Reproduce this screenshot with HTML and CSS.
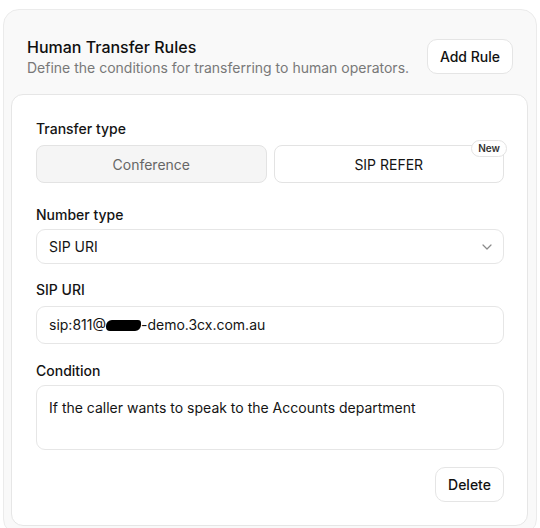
FILE: index.html
```html
<!DOCTYPE html>
<html lang="en">
<head>
<meta charset="utf-8">
<title>Human Transfer Rules</title>
<link rel="stylesheet" href="styles.css">
</head>
<body>
<section class="panel">
  <header class="panel-head">
    <div class="head-text">
      <h2 class="title">Human Transfer Rules</h2>
      <p class="subtitle">Define the conditions for transferring to human operators.</p>
    </div>
    <button class="btn btn-add">Add Rule</button>
  </header>

  <div class="rule-card">
    <div class="field field-first">
      <div class="label">Transfer type</div>
      <div class="toggle-group">
        <button class="toggle toggle-off">Conference</button>
        <button class="toggle toggle-on">SIP REFER<span class="badge">New</span></button>
      </div>
    </div>

    <div class="field field-number">
      <div class="label label-tight">Number type</div>
      <div class="select">
        <span>SIP URI</span>
        <svg class="chevron" width="16" height="16" viewBox="0 0 24 24" fill="none" stroke="currentColor" stroke-width="1.8" stroke-linecap="round" stroke-linejoin="round"><path d="m6 9 6 6 6-6"/></svg>
      </div>
    </div>

    <div class="field field-uri">
      <div class="label">SIP URI</div>
      <div class="input">sip:811@<span class="redact"></span>-demo.3cx.com.au</div>
    </div>

    <div class="field field-cond">
      <div class="label label-tight">Condition</div>
      <div class="textarea">If the caller wants to speak to the Accounts department</div>
    </div>

    <div class="actions">
      <button class="btn btn-delete">Delete</button>
    </div>
  </div>
</section>
</body>
</html>
```

FILE: styles.css
```css
* { box-sizing: border-box; }

html, body {
  margin: 0;
  padding: 0;
  background: #ffffff;
  height: 528px;
  overflow: hidden;
}

body {
  font-family: Inter, "Noto Sans", sans-serif;
  color: #171717;
  padding: 9px 3px 0 3px;
}

.panel {
  width: 534px;
  background: #f9f9f9;
  border: 1px solid #ebebeb;
  border-radius: 16px;
  padding-bottom: 8px;
}

.panel-head {
  display: flex;
  align-items: center;
  justify-content: space-between;
  padding: 26px 23px 0 23px;
}

.title {
  margin: 0;
  font-size: 16px;
  line-height: 22px;
  font-weight: 500;
  color: #0f0f0f;
}

.subtitle {
  margin: 0;
  font-size: 14px;
  line-height: 20px;
  color: #787878;
}

.btn {
  font-family: inherit;
  font-size: 14px;
  font-weight: 500;
  color: #111111;
  background: #ffffff;
  border: 1px solid #e5e5e5;
  border-radius: 10px;
  height: 35px;
  padding: 0 12px;
  cursor: pointer;
}

.btn-add {
  margin-top: -1px;
}

.btn-delete {
  width: 69px;
  padding: 0;
}

.rule-card {
  margin: 16px 8px 0 7px;
  background: #ffffff;
  border: 1px solid #e6e6e6;
  border-radius: 12px;
  padding: 24px 23px 23px 24px;
}

.field-first { margin-top: 0; }
.field-number { margin-top: 22px; }
.field-uri { margin-top: 16px; }
.field-cond { margin-top: 17px; }

.label {
  font-size: 14px;
  line-height: 20px;
  font-weight: 500;
  color: #141414;
  margin-bottom: 6px;
}

.label-tight { margin-bottom: 4px; }

.toggle-group {
  display: grid;
  grid-template-columns: 1fr 1fr;
  gap: 7px;
  margin-top: 3px;
}

.toggle {
  position: relative;
  font-family: inherit;
  font-size: 14px;
  height: 38px;
  border-radius: 8px;
  border: 1px solid #e3e3e3;
  padding: 0;
}

.toggle-off {
  background: #f5f5f5;
  color: #666666;
}

.toggle-on {
  background: #ffffff;
  color: #141414;
}

.badge {
  position: absolute;
  top: -6px;
  right: -4px;
  height: 17px;
  padding: 0 6px;
  background: #ffffff;
  border: 1px solid #e3e3e3;
  border-radius: 9px;
  font-size: 10px;
  font-weight: 600;
  line-height: 15px;
  color: #333333;
}

.select, .input, .textarea {
  border: 1px solid #e6e6e6;
  border-radius: 9px;
  background: #ffffff;
  font-size: 14px;
  line-height: 20px;
  color: #141414;
  padding: 0 12px;
}

.select {
  height: 35px;
  display: flex;
  align-items: center;
  justify-content: space-between;
  padding-right: 8px;
}

.chevron {
  color: #8a8a8a;
}

.input {
  height: 38px;
  display: flex;
  align-items: center;
}

.redact {
  display: inline-block;
  width: 35px;
  height: 11px;
  background: #000000;
  border-radius: 6px 3px 6px 4px;
  margin-top: 1px;
}

.textarea {
  height: 65px;
  padding-top: 12px;
}

.actions {
  display: flex;
  justify-content: flex-end;
  margin-top: 17px;
}
```
